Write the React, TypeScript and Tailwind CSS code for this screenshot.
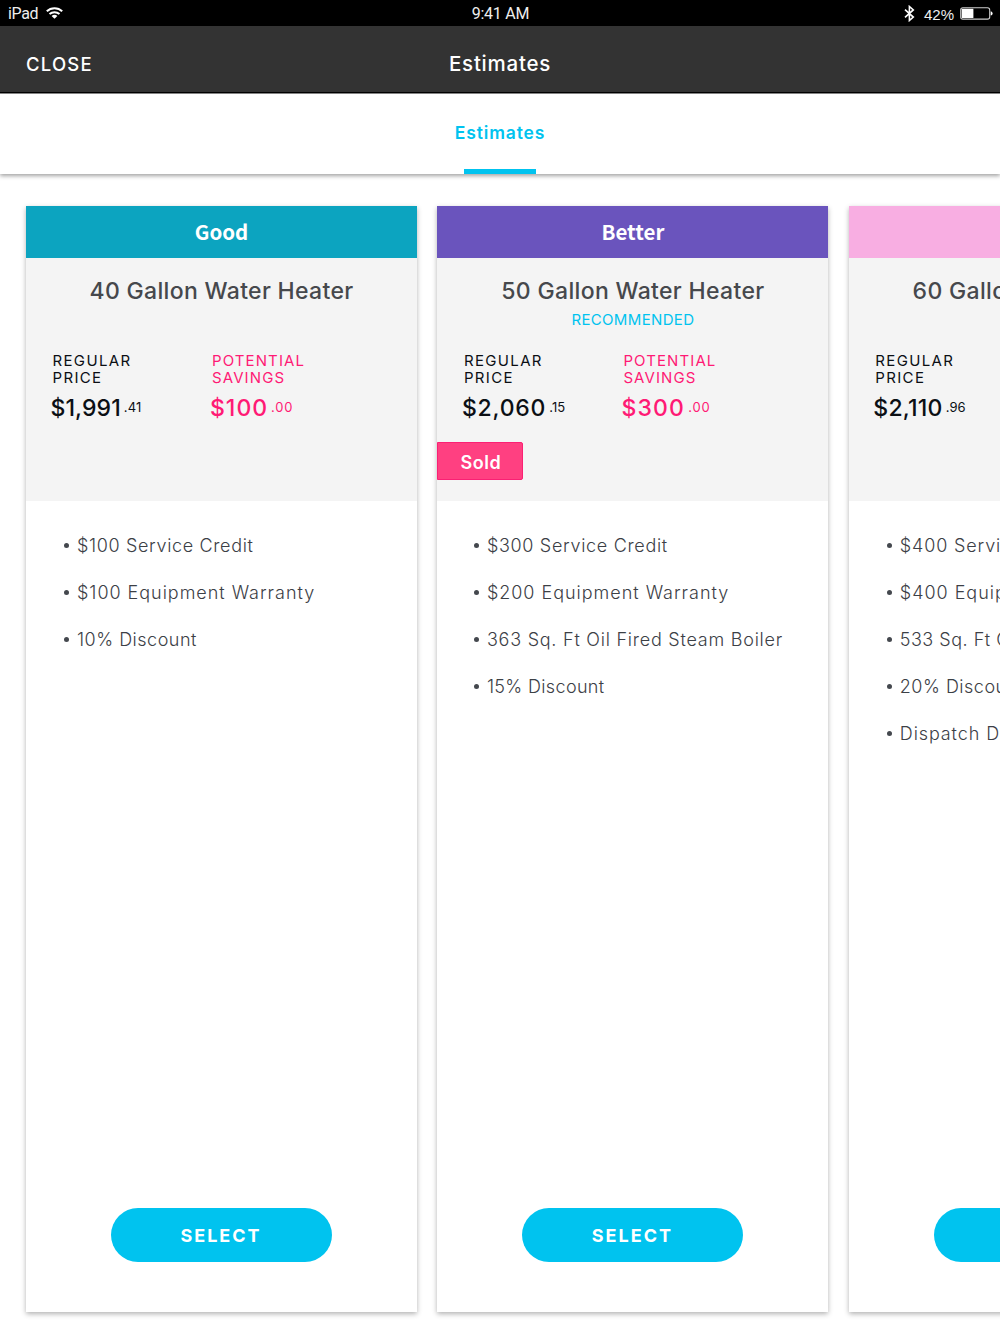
type Estimate = {
  tier: string;
  tierClass: string;
  title: string;
  recommended?: boolean;
  sold?: boolean;
  price: [string, string];
  priceClass: string;
  savings: [string, string];
  savingsClass: string;
  listClass: string;
  items: { text: string; className: string }[];
};

const estimates: Estimate[] = [
  {
    tier: "Good",
    tierClass: "bg-[#0ca4c0]",
    title: "40 Gallon Water Heater",
    price: ["$1,991", ".41"],
    priceClass: "tracking-[0.1px]",
    savings: ["$100", ".00"],
    savingsClass: "tracking-[1px]",
    listClass: "pl-[38px]",
    items: [
      { text: "$100 Service Credit", className: "tracking-[0.65px]" },
      { text: "$100 Equipment Warranty", className: "tracking-[0.97px]" },
      { text: "10% Discount", className: "tracking-[0.5px]" },
    ],
  },
  {
    tier: "Better",
    tierClass: "bg-[#6a54bd]",
    title: "50 Gallon Water Heater",
    recommended: true,
    sold: true,
    price: ["$2,060", ".15"],
    priceClass: "tracking-[0.8px]",
    savings: ["$300", ".00"],
    savingsClass: "tracking-[1.2px]",
    listClass: "pl-[36.5px]",
    items: [
      { text: "$300 Service Credit", className: "tracking-[0.68px]" },
      { text: "$200 Equipment Warranty", className: "tracking-[0.98px]" },
      { text: "363 Sq. Ft Oil Fired Steam Boiler", className: "tracking-[0.76px]" },
      { text: "15% Discount", className: "tracking-[0.35px]" },
    ],
  },
  {
    tier: "Best",
    tierClass: "bg-[#f8aee2]",
    title: "60 Gallon Water Heater",
    price: ["$2,110", ".96"],
    priceClass: "tracking-[0.25px]",
    savings: ["$400", ".00"],
    savingsClass: "tracking-[1.2px]",
    listClass: "pl-[38px]",
    items: [
      { text: "$400 Service Credit", className: "tracking-[0.85px]" },
      { text: "$400 Equipment Warranty", className: "tracking-[0.98px]" },
      { text: "533 Sq. Ft Oil Fired Steam Boiler", className: "tracking-[0.5px]" },
      { text: "20% Discount", className: "tracking-[0.5px]" },
      { text: "Dispatch Discount", className: "tracking-[0.9px]" },
    ],
  },
];

function WifiIcon() {
  return (
    <svg width="17" height="12" viewBox="0 0 17 12" fill="none">
      <path d="M0.8 4.3C5.1 0.2 11.9 0.2 16.2 4.3" stroke="#fff" strokeWidth="2" />
      <path d="M3.5 7C6.3 4.5 10.7 4.5 13.5 7" stroke="#fff" strokeWidth="2" />
      <path d="M5.6 8.9C7.3 7.5 9.7 7.5 11.4 8.9L8.5 11.7Z" fill="#fff" />
    </svg>
  );
}

function BluetoothIcon() {
  return (
    <svg width="11" height="17" viewBox="0 0 11 17" fill="none">
      <path d="M1 4.7L9.3 12.1L5.4 15.5V1.5L9.3 4.9L1 12.3" stroke="#fff" strokeWidth="1.6" />
    </svg>
  );
}

function BatteryIcon() {
  return (
    <svg width="33" height="13" viewBox="0 0 33 13" fill="none">
      <rect x="0.7" y="0.7" width="29" height="11.4" rx="2.2" stroke="#ccc" strokeWidth="1.1" />
      <path d="M2.6 1.7H13.4V11.1H2.6Q1.7 11.1 1.7 10.2V2.6Q1.7 1.7 2.6 1.7Z" fill="#fff" />
      <path d="M30.7 4.2Q32.6 4.7 32.6 6.4Q32.6 8.1 30.7 8.6Z" fill="#fff" />
    </svg>
  );
}

function StatusBar() {
  return (
    <div className="grid h-[26px] grid-cols-3 items-center bg-black pl-2 pr-[7px] font-[Roboto,sans-serif] text-[16px] text-[#eee]">
      <div className="flex items-center gap-2">
        <span className="pt-[2px] tracking-[-0.35px]">iPad</span>
        <WifiIcon />
      </div>
      <span className="pt-[2px] text-center tracking-[-0.25px]">9:41 AM</span>
      <div className="flex items-center justify-end">
        <BluetoothIcon />
        <span className="ml-[9px] mr-[6px] pt-[4px] font-['Liberation_Sans',sans-serif] text-[15px]">42%</span>
        <BatteryIcon />
      </div>
    </div>
  );
}

type PriceProps = {
  label: string[];
  value: [string, string];
  className: string;
  labelClass: string;
  centsClass: string;
  color: string;
};

function Price({ label, value, className, labelClass, centsClass, color }: PriceProps) {
  return (
    <div className={`w-[159.5px] shrink-0 ${color}`}>
      <div className={`text-[15px] leading-[17px] ${labelClass}`}>
        {label.map((line) => (
          <div key={line}>{line}</div>
        ))}
      </div>
      <div className="-ml-[2px] mt-[7px] flex h-[30px] items-center whitespace-nowrap">
        <span className={`text-[23px] font-medium ${className}`}>{value[0]}</span>
        <span className={`ml-[3px] pb-px text-[13px] ${centsClass}`}>{value[1]}</span>
      </div>
    </div>
  );
}

function EstimateCard({ estimate }: { estimate: Estimate }) {
  return (
    <article className="flex w-[391px] shrink-0 flex-col bg-white shadow-[0_2px_5px_rgba(0,0,0,0.3)]">
      <h2
        className={`flex h-[52px] items-center justify-center pb-[3px] font-['Noto_Sans_CJK_JP',sans-serif] text-[20.5px] font-bold leading-[30px] text-white ${estimate.tierClass}`}
      >
        {estimate.tier}
      </h2>

      <div className="h-[243px] bg-[#f4f4f4] pt-4">
        <h3 className="text-center text-[23px] font-medium leading-[35px] tracking-[0.33px] text-[#46484c]">
          {estimate.title}
        </h3>
        <p className="h-6 text-center text-[15px] leading-[22px] tracking-[0.35px] text-[#00c3ef]">
          {estimate.recommended && "RECOMMENDED"}
        </p>
        <div className="mt-[19px] flex pl-[26.5px]">
          <Price
            label={["REGULAR", "PRICE"]}
            value={estimate.price}
            className={estimate.priceClass}
            labelClass="tracking-[1.35px]"
            centsClass="tracking-[0.1px]"
            color="text-[#0b0f14]"
          />
          <Price
            label={["POTENTIAL", "SAVINGS"]}
            value={estimate.savings}
            className={estimate.savingsClass}
            labelClass="tracking-[1.1px]"
            centsClass="tracking-[0.8px]"
            color="text-[#ff1a75]"
          />
        </div>
        {estimate.sold && (
          <div className="mt-[19px] flex h-[38px] w-[86px] items-center justify-center rounded-r-[2px] border border-[#fb2074] bg-[#ff4081] pl-px pt-[3px] text-[18px] font-semibold tracking-[0.6px] text-white">
            Sold
          </div>
        )}
      </div>

      <ul className={`flex-1 pt-[21px] text-[18px] font-light text-[#3c4046] ${estimate.listClass}`}>
        {estimate.items.map((item) => (
          <li key={item.text} className="flex h-[47px] items-center whitespace-nowrap">
            <span className="mr-[8px] size-[5px] shrink-0 rounded-full bg-[#44484e]" />
            <span className={item.className}>{item.text}</span>
          </li>
        ))}
      </ul>

      <button className="mx-auto mb-[50px] h-[54px] w-[221px] rounded-full bg-[#00c3ef] pr-px text-[18px] font-bold tracking-[2px] text-white">
        SELECT
      </button>
    </article>
  );
}

export default function App() {
  return (
    <div className="flex h-[1333px] w-[1000px] flex-col overflow-hidden bg-white font-[Inter,sans-serif]">
      <StatusBar />

      <header className="grid h-[68px] shrink-0 grid-cols-3 items-center border-b border-[#8a8a8a] bg-[#333] px-[26px] pt-[9px] text-white shadow-[inset_0_-1px_0_#000]">
        <button className="pt-px text-left text-[18.5px] font-medium tracking-[1.2px]">CLOSE</button>
        <h1 className="text-center text-[20.5px] font-medium tracking-[0.75px]">Estimates</h1>
      </header>

      <nav className="flex h-[80px] shrink-0 justify-center shadow-[0_2px_4px_rgba(0,0,0,0.36)]">
        <button className="flex flex-col items-center justify-between pt-[26px] text-[17.5px] font-semibold leading-[26px] tracking-[0.85px] text-[#00c3ef]">
          <span>Estimates</span>
          <span className="h-[5px] w-[72px] bg-[#00c3ef]" />
        </button>
      </nav>

      <main className="flex h-[1138px] shrink-0 gap-[20.4px] pl-[26px] pt-[32px]">
        {estimates.map((estimate) => (
          <EstimateCard key={estimate.tier} estimate={estimate} />
        ))}
      </main>
    </div>
  );
}
